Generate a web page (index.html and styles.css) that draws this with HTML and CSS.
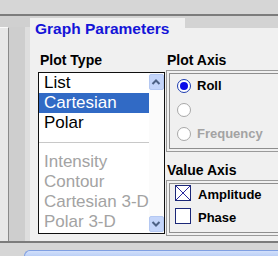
FILE: index.html
```html
<!DOCTYPE html>
<html>
<head>
<meta charset="utf-8">
<link rel="stylesheet" href="styles.css">
</head>
<body>
<div class="screen">
  <div class="topbar"></div>
  <div class="middle">
    <div class="side">
      <div class="side-a"></div>
      <div class="side-b"></div>
      <div class="side-c"></div>
    </div>
    <div class="panel">
      <div class="panel-head">
        <div class="tab"><div class="title">Graph Parameters</div></div>
        <div class="tab-rest"></div>
      </div>
      <div class="panel-body">
        <div class="col-left">
          <div class="label">Plot Type</div>
          <div class="listbox">
            <ul class="items">
              <li class="item">List</li>
              <li class="item selected">Cartesian</li>
              <li class="item">Polar</li>
              <li class="sep"></li>
              <li class="item disabled">Intensity</li>
              <li class="item disabled">Contour</li>
              <li class="item disabled">Cartesian 3-D</li>
              <li class="item disabled">Polar 3-D</li>
            </ul>
            <div class="scrollbar">
              <div class="sb-btn"><svg width="10" height="8" viewBox="0 0 10 8"><polyline points="1.5,6 5,2.5 8.5,6" fill="none" stroke="#4d6185" stroke-width="2"/></svg></div>
              <div class="sb-btn"><svg width="10" height="8" viewBox="0 0 10 8"><polyline points="1.5,2 5,5.5 8.5,2" fill="none" stroke="#4d6185" stroke-width="2"/></svg></div>
            </div>
          </div>
        </div>
        <div class="col-right">
          <div class="label">Plot Axis</div>
          <div class="group">
            <div class="group-inner radios">
              <div class="opt"><span class="radio on"></span><span class="opt-text">Roll</span></div>
              <div class="opt"><span class="radio"></span><span class="opt-text"></span></div>
              <div class="opt"><span class="radio"></span><span class="opt-text disabled">Frequency</span></div>
            </div>
          </div>
          <div class="label label-value">Value Axis</div>
          <div class="group">
            <div class="group-inner checks">
              <div class="opt chk-row"><span class="check"><svg width="14" height="14" viewBox="0 0 14 14"><line x1="0" y1="0" x2="14" y2="14" stroke="#2a2aa0" stroke-width="1"/><line x1="14" y1="0" x2="0" y2="14" stroke="#2a2aa0" stroke-width="1"/></svg></span><span class="opt-text">Amplitude</span></div>
              <div class="opt chk-row"><span class="check"></span><span class="opt-text">Phase</span></div>
            </div>
          </div>
        </div>
      </div>
    </div>
  </div>
  <div class="bottom"><div class="bluetab"></div></div>
</div>
</body>
</html>
```
FILE: styles.css
```css
* { box-sizing: border-box; }
html, body { margin: 0; padding: 0; }
body {
  width: 278px;
  height: 256px;
  overflow: hidden;
  background: #d3d3d3;
  font-family: "Liberation Sans", Arial, sans-serif;
}
.screen { width: 278px; height: 256px; overflow: hidden; }
.topbar {
  height: 16px;
  background: #d6d6d6;
  border-bottom: 2px solid #7c7c7c;
}
.middle {
  height: 225px;
  display: flex;
}
.side {
  width: 30px;
  display: flex;
  background: #d0d0d0;
}
.side-a {
  width: 9px;
  margin-top: 11px;
  background: #e8e8e8;
  border-top: 1px solid #fafafa;
  border-right: 1px solid #8a8a8a;
}
.side-b {
  width: 16px;
  margin-top: 11px;
  background: #cecece;
}
.side-c {
  width: 5px;
  margin-top: 11px;
  background: #dedede;
}
.panel {
  flex: 1;
  margin-top: 2px;
  display: flex;
  flex-direction: column;
  background: #f0f0f0;
}
.panel-head {
  height: 10px;
  display: flex;
}
.tab {
  width: 155px;
  background: #f0f0f0;
}
.tab-rest {
  flex: 1;
  background: #d3d3d3;
}
.title {
  padding: 2px 0 0 5px;
  font-size: 15.5px;
  line-height: 18px;
  font-weight: bold;
  color: #1414d8;
  white-space: nowrap;
}
.panel-body {
  flex: 1;
  display: flex;
  padding: 24px 0 0 8px;
}
.col-left { width: 127px; }
.col-right { flex: 1; margin-right: -12px; }
.label {
  font-size: 14px;
  line-height: 17px;
  font-weight: bold;
  color: #000;
  padding-left: 2px;
  margin-bottom: 3px;
  white-space: nowrap;
}
.col-right .label { margin-bottom: 1px; }
.col-right .label-value { margin-top: 10px; }
.listbox {
  height: 162px;
  border: 1px solid #101010;
  background: #fff;
  display: flex;
}
.items {
  flex: 1;
  list-style: none;
  margin: 0;
  padding: 0;
}
.item {
  height: 20px;
  line-height: 20px;
  font-size: 17px;
  padding-left: 5px;
  color: #000;
  white-space: nowrap;
  overflow: hidden;
}
.item.selected { background: #316ac5; color: #fff; }
.item.disabled { color: #a3a3a3; }
.sep {
  height: 19px;
  display: flex;
  align-items: center;
}
.sep::before {
  content: "";
  flex: 1;
  height: 1px;
  background: #c8c8c8;
}
.scrollbar {
  width: 16px;
  display: flex;
  flex-direction: column;
  justify-content: space-between;
  padding: 1px 0;
  background: #fbfbfb;
}
.sb-btn {
  height: 16px;
  border: 1px solid #b4c8f2;
  border-radius: 2px;
  background: #c4d5fa;
  display: flex;
  align-items: center;
  justify-content: center;
}
.group {
  margin-left: 1px;
  border: 1px solid #9a9a9a;
  padding: 2px 0 2px 2px;
}
.group-inner {
  border: 1px solid #8e8e8e;
  border-right: none;
  padding-bottom: 2px;
}
.radios { padding-left: 7px; }
.checks { padding-left: 5px; }
.opt {
  height: 24px;
  display: flex;
  align-items: center;
}
.chk-row {
  height: 23px;
  align-items: flex-start;
}
.radio {
  width: 14px;
  height: 14px;
  border-radius: 50%;
  border: 1px solid #a8a8a8;
  background: #fff;
  display: flex;
  align-items: center;
  justify-content: center;
}
.radio.on { border-color: #1c3cb0; }
.radio.on::after {
  content: "";
  width: 8px;
  height: 8px;
  border-radius: 50%;
  background: #0a0ae8;
}
.opt-text {
  margin-left: 6px;
  font-size: 13px;
  line-height: 24px;
  font-weight: bold;
  color: #000;
  white-space: nowrap;
}
.opt-text.disabled { color: #a3a3a3; }
.check {
  width: 16px;
  height: 16px;
  margin-top: 1px;
  border: 1px solid #1c2878;
  background: #fff;
  display: flex;
}
.chk-row .opt-text {
  margin-left: 7px;
  line-height: 22px;
}
.bottom {
  height: 15px;
  border-top: 2px solid #7c7c7c;
  background: #d6d6d6;
  padding-top: 7px;
  padding-left: 24px;
}
.bluetab {
  height: 10px;
  border-top: 1px solid #7f9fe2;
  border-left: 1px solid #7f9fe2;
  border-top-left-radius: 6px;
  background: linear-gradient(#d2e0fb, #a9c2f2);
}
```
